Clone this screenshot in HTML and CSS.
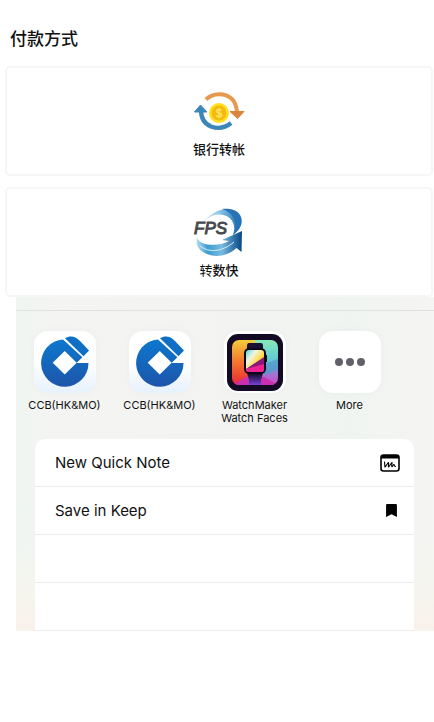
FILE: index.html
```html
<!DOCTYPE html>
<html lang="zh-Hans">
<head>
<meta charset="utf-8">
<meta name="viewport" content="width=device-width, initial-scale=1">
<title>付款方式</title>
<link rel="stylesheet" href="styles.css">
</head>
<body>
<svg class="defs" width="0" height="0" aria-hidden="true">
  <defs>
    <linearGradient id="ccbBlue" x1="0" y1="0" x2="0" y2="1"><stop offset="0" stop-color="#0c78ce"/><stop offset="1" stop-color="#1d55aa"/></linearGradient>
    <symbol id="ccb" viewBox="0 0 62 62">
      <path fill="url(#ccbBlue)" d="M54.5 32A23.7 23.7 0 1 1 29 8.4L48.400 26.200L42.5 32Z"/>
      <path fill="#0e6fc4" d="M31 7.200C36 4.500 41 4.800 46 10L55 19.500L49.500 25.200Z"/>
      <path fill="#fff" d="M30.700 20L42.700 31.800L30.700 43.600L18.700 31.800Z"/>
    </symbol>
  </defs>
</svg>
<main>
  <h1 class="title">付款方式</h1>
  <div class="methods">
    <button class="method" type="button">
      <svg class="method-icon" viewBox="0 -2 52 48" aria-hidden="true">
        <path d="M13 10.500C20 3.500 32 3.500 39 10C42 13 43.500 17 44 23" fill="none" stroke="#e69a50" stroke-width="4"/>
        <path d="M37 22.500L44.500 29.500L51 22.500Z" fill="#d9853d" stroke="#d9853d" stroke-linejoin="round"/>
        <path d="M8 21C8 29 12 35 18 37.500C25 40 32 39 38 34" fill="none" stroke="#3d86b8" stroke-width="4.400"/>
        <path d="M1.500 23L7.500 16L14 23Z" fill="#3d86b8" stroke="#3d86b8" stroke-linejoin="round"/>
        <circle cx="26" cy="24" r="10" fill="#ffe01c"/>
        <circle cx="26" cy="24" r="7.500" fill="#f5b911"/>
        <path d="M28.500 21.500C27 19.500 23.500 20.500 23.500 22.200C23.500 24.500 28.700 23.500 28.700 26C28.700 28.200 24.500 28.500 23.200 26.500M26 19V29.500" fill="none" stroke="#ffe45b" stroke-width="1.500"/>
      </svg>
      <span class="method-name">银行转帐</span>
    </button>
    <button class="method" type="button">
      <svg class="method-icon" viewBox="0 0 52 48" aria-hidden="true">
        <defs>
          <linearGradient id="top"><stop offset="0" stop-color="#eaf6fb"/><stop offset=".45" stop-color="#86c3e3"/><stop offset="1" stop-color="#1769b2"/></linearGradient>
          <linearGradient id="low"><stop offset="0" stop-color="#b5deef"/><stop offset=".25" stop-color="#3c9bcf"/><stop offset=".55" stop-color="#77bce0"/><stop offset="1" stop-color="#074584"/></linearGradient>
        </defs>
        <path fill="url(#top)" d="M10 14C20 2 34 -2 43 3C52 9 50 20 40 27C44 16 38 7 27 6.500C20 6 15 10 10 14Z"/>
        <path fill="#2873b5" d="M29 1C37 0 44 2 47 8C50 15 46 22 40 27C46 15 40 4 29 1Z"/>
        <path fill="url(#low)" d="M4 30C8 38 25 39 36 33L29 32L49 23L48.500 44L43.500 40C35 48 23 50 14 46C6 43 2 37 4 30Z"/>
        <path fill="none" stroke="#d6eff9" stroke-width="1" d="M7 38C16 45 29 44 41 34"/>
        <text class="fps" x="1" y="26">FPS</text>
      </svg>
      <span class="method-name"><span class="light">转</span>数快</span>
    </button>
  </div>

  <section class="sheet" aria-label="Share">
    <div class="apps">
      <button class="app" type="button">
        <svg class="app-icon ccb" viewBox="0 0 62 62" aria-hidden="true"><use href="#ccb"/></svg>
        <span>CCB(HK&amp;MO)</span>
      </button>
      <button class="app" type="button">
        <svg class="app-icon ccb" viewBox="0 0 62 62" aria-hidden="true"><use href="#ccb"/></svg>
        <span>CCB(HK&amp;MO)</span>
      </button>
      <button class="app" type="button">
        <svg class="app-icon" viewBox="0 0 62 62" aria-hidden="true">
          <defs>
            <linearGradient id="face" x1="0" y1="0" x2="0" y2="1"><stop offset="0" stop-color="#f3cd3c"/><stop offset=".45" stop-color="#f47c30"/><stop offset="1" stop-color="#ed2635"/></linearGradient>
            <linearGradient id="side" x1="0" y1="0" x2="0" y2="1"><stop offset="0" stop-color="#86e8b9"/><stop offset=".45" stop-color="#62c9d4"/><stop offset=".65" stop-color="#8b88d2"/><stop offset="1" stop-color="#d545cb"/></linearGradient>
            <linearGradient id="strap" x1="0" y1="0" x2="0" y2="1"><stop offset="0" stop-color="#10071d"/><stop offset="1" stop-color="#7542d7"/></linearGradient>
            <linearGradient id="dial" x1="0" y1="0" x2="1" y2="1"><stop offset="0" stop-color="#52d5e7"/><stop offset=".3" stop-color="#f3f4df"/><stop offset=".6" stop-color="#ffd83b"/></linearGradient>
            <clipPath id="tile"><rect x="8" y="9" width="46" height="45" rx="7"/></clipPath>
            <clipPath id="screen"><rect x="22" y="19" width="18" height="22" rx="3"/></clipPath>
          </defs>
          <rect x="3" y="3" width="56" height="57" rx="11" fill="#130b24"/>
          <g clip-path="url(#tile)">
            <path fill="url(#face)" d="M8 9H34V54H8Z"/>
            <path fill="url(#side)" d="M31 9H54V54H31Z"/>
            <path fill="#4e9dce" opacity=".75" d="M40 33L54 28V39L40 44Z"/>
            <path fill="#c830ad" d="M8 54L24 45L40 46L54 54Z"/>
          </g>
          <path fill="#171032" d="M25 12H37Q39 12 39 15V19H23V15Q23 12 25 12Z"/>
          <path fill="url(#strap)" d="M23 42H39L37 49V54H25V49Z"/>
          <rect x="20" y="17" width="22" height="26" rx="5" fill="#0c0718"/>
          <path fill="#0c0718" d="M41 24H43V31H41Z"/>
          <g clip-path="url(#screen)">
            <path fill="url(#dial)" d="M22 19H40V41H22Z"/>
            <path fill="#8a197c" d="M22 38L40 26V41H22Z"/>
            <path fill="#ed2393" d="M22 38L40 33V41H22Z"/>
          </g>
        </svg>
        <span>WatchMaker Watch Faces</span>
      </button>
      <button class="app" type="button">
        <svg class="app-icon" viewBox="0 0 62 62" fill="#626169" aria-hidden="true"><circle cx="20" cy="31" r="4"/><circle cx="31" cy="31" r="4"/><circle cx="42" cy="31" r="4"/></svg>
        <span>More</span>
      </button>
    </div>
    <ul class="actions">
      <li><button class="action" type="button">
        <span>New Quick Note</span>
        <svg width="20" height="18" viewBox="0 0 20 18" aria-hidden="true"><rect x="1" y="1" width="18" height="16" rx="2.500" fill="#fff" stroke="#000" stroke-width="1.600"/><path d="M1 1H19V4.500H1Z"/><path d="M4.500 8C5 10 4.500 12 5 13C6.500 12 7 9.500 8.500 8.500C9 10 8 12 8.500 13C10 12 10.500 9.500 12 8.500C12.500 10 11 12.500 12 12.700C13 12.800 13 10.500 14 10.500C14.500 11 14 12.500 15.500 12.500" fill="none" stroke="#000" stroke-width="1.100" stroke-linecap="round" stroke-linejoin="round"/></svg>
      </button></li>
      <li><button class="action" type="button">
        <span>Save in Keep</span>
        <svg class="bookmark" width="11" height="13" viewBox="0 0 10 12" aria-hidden="true"><path d="M1 0H9Q10 0 10 1V12L5 9.500L0 12V1Q0 0 1 0Z"/></svg>
      </button></li>
      <li></li>
      <li></li>
    </ul>
  </section>
</main>
</body>
</html>
```
FILE: styles.css
```css
* {
  box-sizing: border-box;
}

body {
  margin: 0;
  background: #fff;
  color: #111;
  font-family: Inter, "Noto Sans CJK SC", sans-serif;
}

button {
  margin: 0;
  border: 0;
  background: none;
  color: inherit;
  font: inherit;
}

.defs {
  position: absolute;
}

.title {
  margin: 0;
  padding: 26px 10px 16px;
  font-family: "Noto Sans CJK SC", sans-serif;
  font-size: 17px;
  font-weight: 500;
  line-height: 24px;
}

.methods {
  display: grid;
  gap: 11px;
  padding: 0 1px 0 5px;
}

.method {
  display: flex;
  flex-direction: column;
  align-items: center;
  gap: 4px;
  padding: 19px 0 15px;
  border: 2px solid #f6f6f6;
  border-radius: 5px;
  background: #fff;
}

.method-icon {
  width: 52px;
  height: 48px;
}

.method-name {
  font-family: "Noto Sans CJK SC", sans-serif;
  font-size: 13px;
  font-weight: 500;
  line-height: 20px;
}

.light {
  font-weight: 400;
}

.fps {
  fill: #48494d;
  stroke: #48494d;
  stroke-width: 1px;
  font-family: "Liberation Sans", sans-serif;
  font-size: 17px;
  font-style: italic;
}

.sheet {
  margin-left: 16px;
  padding: 13px 0 0;
  background:
    linear-gradient(to top, #f9f1eb 0, #f5f5ee 40px, transparent 90px),
    linear-gradient(to right, #eff5f1, #f4f4f3 40px, #f3f4f2 50%, #f0f4f1 80%, #f5f5f3);
}

.apps {
  display: grid;
  grid-template-columns: repeat(4, 95px);
  padding: 20px 1px 14px;
  border-top: 1px solid #dfe1df;
}

.app {
  display: flex;
  flex-direction: column;
  align-items: center;
  gap: 6px;
  padding: 0 8px;
  font-size: 11px;
  line-height: 13px;
}

.app-icon {
  width: 62px;
  height: 62px;
  border-radius: 14px;
  background: #fff;
  box-shadow: 0 0 10px rgb(0 0 0 / 3%);
}

.ccb {
  background: linear-gradient(#fff 50%, #e6f1fd);
}

.actions {
  margin: 0 20px 0 19px;
  padding: 0;
  overflow: hidden;
  border-radius: 10px 10px 0 0;
  background: #fff;
  list-style: none;
}

.actions li {
  height: 48px;
  border-bottom: 1px solid #ececec;
}

.action {
  display: flex;
  align-items: center;
  justify-content: space-between;
  width: 100%;
  height: 100%;
  padding: 0 14px 0 20px;
  font-size: 15px;
  text-align: left;
}

.bookmark {
  margin-right: 3px;
}
```
